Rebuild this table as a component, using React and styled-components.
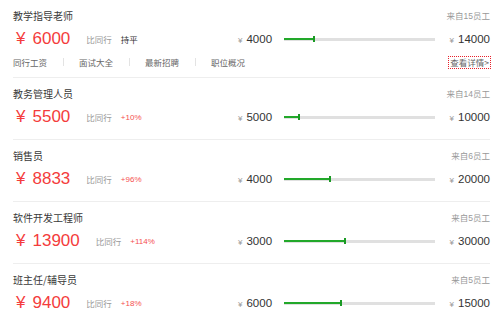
import React from 'react';
import styled, { createGlobalStyle } from 'styled-components';

const Global = createGlobalStyle`
  html, body { margin: 0; padding: 0; background: #fff; }
  body { font-family: "Liberation Sans", Arial, "Noto Sans CJK SC", sans-serif; color: #333; }
`;

const List = styled.div`
  padding: 0 10px 0 13px;
  width: 477px;
`;

const Section = styled.section`
  display: grid;
  grid-template-columns: 1fr 252px;
  row-gap: 6px;
  padding: 9px 0 ${p => (p.$withLinks ? 9 : 12)}px;
  border-bottom: 1px solid #eeeeee;
`;

const Title = styled.div`
  height: 14px;
  line-height: 14px;
  font-size: 10px;
  color: #3a3a3a;
  font-family: "Noto Sans CJK SC", sans-serif;
`;

const Source = styled.div`
  height: 14px;
  line-height: 14px;
  font-size: 8.5px;
  color: #999;
  text-align: right;
  font-family: "Liberation Sans", "Noto Sans CJK SC", sans-serif;
`;

const PriceInfo = styled.div`
  display: flex;
  align-items: center;
  height: 20px;
`;

const Yen = styled.span`
  font-size: 17px;
  color: #f43c3c;
  margin: 0 7px 0 3px;
  font-family: "Liberation Sans", sans-serif;
`;

const Amount = styled.span`
  font-size: 17px;
  color: #f43c3c;
  font-family: "Liberation Sans", sans-serif;
`;

const CompareLabel = styled.span`
  font-size: 8.5px;
  color: #999;
  margin-left: 16px;
  font-family: "Noto Sans CJK SC", sans-serif;
`;

const CompareValue = styled.span`
  font-size: ${p => (p.$flat ? '8.5px' : '8px')};
  color: ${p => (p.$flat ? '#333' : '#f55050')};
  margin-left: 9px;
  font-family: "Liberation Sans", "Noto Sans CJK SC", sans-serif;
`;

const RangeRow = styled.div`
  display: flex;
  align-items: center;
  height: 20px;
`;

const RangeLabel = styled.span`
  display: flex;
  align-items: baseline;
  font-size: 11.5px;
  color: #333;
  width: ${p => (p.$end ? 'auto' : '36px')};
  flex: ${p => (p.$end ? '1' : 'none')};
  justify-content: ${p => (p.$end ? 'flex-end' : 'flex-start')};
`;

const SmallYen = styled.span`
  font-size: 8px;
  color: #999;
  margin-right: 4px;
`;

const Track = styled.div`
  position: relative;
  width: 151px;
  height: 3px;
  margin: 0 12px 0 10px;
  background: #e0e0e0;
  flex: none;
`;

const Fill = styled.div`
  position: relative;
  height: 2px;
  margin-top: 0.5px;
  background: #22a82a;
`;

const Tick = styled.span`
  position: absolute;
  right: -1px;
  top: -2px;
  width: 2px;
  height: 6px;
  background: #1a9a24;
`;

const LinkRow = styled.div`
  grid-column: 1 / -1;
  display: flex;
  align-items: center;
  height: 12px;
  margin-top: 1px;
  font-size: 8.5px;
  color: #666;
  font-family: "Noto Sans CJK SC", sans-serif;
`;

const LinkItem = styled.span`
  white-space: nowrap;
`;

const Separator = styled.span`
  width: 1px;
  height: 8px;
  background: #e3e3e3;
  margin: 0 15px 0 16px;
`;

const Detail = styled.span`
  margin-left: auto;
  margin-right: -1px;
  border: 1px dotted #e8202a;
  padding: 0 1px;
  height: 11px;
  line-height: 11px;
  color: #666;
  white-space: nowrap;
  font-family: "Noto Sans CJK SC", "Liberation Sans", sans-serif;
`;

const jobs = [
  { title: '教学指导老师', source: '来自15员工', price: 6000, cmp: '持平', min: 4000, max: 14000, links: true },
  { title: '教务管理人员', source: '来自14员工', price: 5500, cmp: '+10%', min: 5000, max: 10000 },
  { title: '销售员', source: '来自6员工', price: 8833, cmp: '+96%', min: 4000, max: 20000 },
  { title: '软件开发工程师', source: '来自5员工', price: 13900, cmp: '+114%', min: 3000, max: 30000 },
  { title: '班主任/辅导员', source: '来自5员工', price: 9400, cmp: '+18%', min: 6000, max: 15000 },
];

const links = ['同行工资', '面试大全', '最新招聘', '职位概况'];

function JobSection({ job }) {
  const pct = ((job.price - job.min) / (job.max - job.min)) * 100;
  return (
    <Section $withLinks={job.links}>
      <Title>{job.title}</Title>
      <Source>{job.source}</Source>
      <PriceInfo>
        <Yen>¥</Yen>
        <Amount>{job.price}</Amount>
        <CompareLabel>比同行</CompareLabel>
        <CompareValue $flat={job.cmp === '持平'}>{job.cmp}</CompareValue>
      </PriceInfo>
      <RangeRow>
        <RangeLabel>
          <SmallYen>¥</SmallYen>
          {job.min}
        </RangeLabel>
        <Track>
          <Fill style={{ width: `${pct}%` }}>
            <Tick />
          </Fill>
        </Track>
        <RangeLabel $end>
          <SmallYen>¥</SmallYen>
          {job.max}
        </RangeLabel>
      </RangeRow>
      {job.links && (
        <LinkRow>
          {links.map((l, i) => (
            <React.Fragment key={l}>
              {i > 0 && <Separator />}
              <LinkItem>{l}</LinkItem>
            </React.Fragment>
          ))}
          <Detail>查看详情&gt;</Detail>
        </LinkRow>
      )}
    </Section>
  );
}

export default function App() {
  return (
    <>
      <Global />
      <List>
        {jobs.map(j => (
          <JobSection key={j.title} job={j} />
        ))}
      </List>
    </>
  );
}
